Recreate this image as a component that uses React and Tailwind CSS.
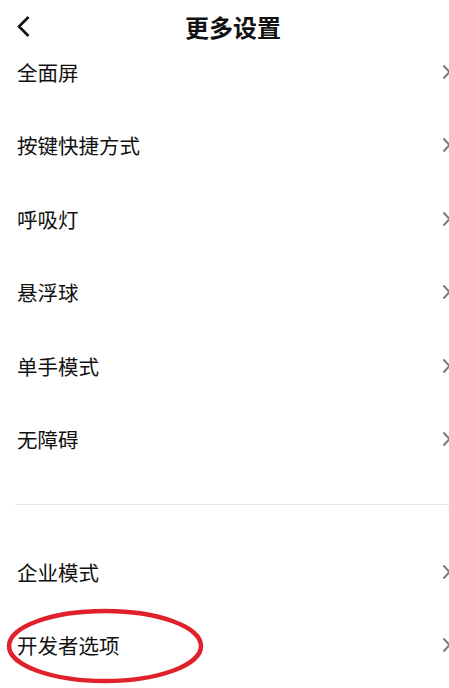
import React from 'react';

const topItems = ['全面屏', '按键快捷方式', '呼吸灯', '悬浮球', '单手模式', '无障碍'];
const bottomItems = ['企业模式', '开发者选项'];

const Chevron = () => (
  <svg width="9" height="16" viewBox="0 0 9 16" className="shrink-0 mr-[-2px]">
    <path d="M1.5 1.5 L7.5 8 L1.5 14.5" fill="none" stroke="#7a7a7a" strokeWidth="2" />
  </svg>
);

const Row = ({ label, marked }) => (
  <div className="relative flex h-[73.5px] items-center justify-between pl-[17px] pr-0">
    <span className="text-[20.5px] leading-none text-[#111]">{label}</span>
    <Chevron />
    {marked && (
      <svg
        className="absolute left-[5px] top-[-2px] pointer-events-none"
        width="202"
        height="78"
        viewBox="0 0 202 78"
      >
        <ellipse cx="100" cy="39" rx="96" ry="35" fill="none" stroke="#e0202a" strokeWidth="4.5" />
      </svg>
    )}
  </div>
);

export default function App() {
  return (
    <div
      className="w-[449px] h-[688px] overflow-hidden bg-white"
      style={{ fontFamily: '"Noto Sans CJK SC", "Noto Sans", sans-serif' }}
    >
      <div className="relative h-[35px] pt-[14px]">
        <svg className="absolute left-[16px] top-[15px]" width="15" height="23" viewBox="0 0 15 23">
          <path d="M12.5 2 L3 11.5 L12.5 21" fill="none" stroke="#111" strokeWidth="2.6" />
        </svg>
        <h1 className="text-center text-[24px] font-bold leading-[26px] text-[#111] pl-[17px]">
          更多设置
        </h1>
      </div>

      {topItems.map((item) => (
        <Row key={item} label={item} />
      ))}

      <div className="pt-[28px] pb-[30px] pl-[15px]">
        <div className="h-px bg-[#e8e8e8]" />
      </div>

      {bottomItems.map((item) => (
        <Row key={item} label={item} marked={item === '开发者选项'} />
      ))}
    </div>
  );
}
